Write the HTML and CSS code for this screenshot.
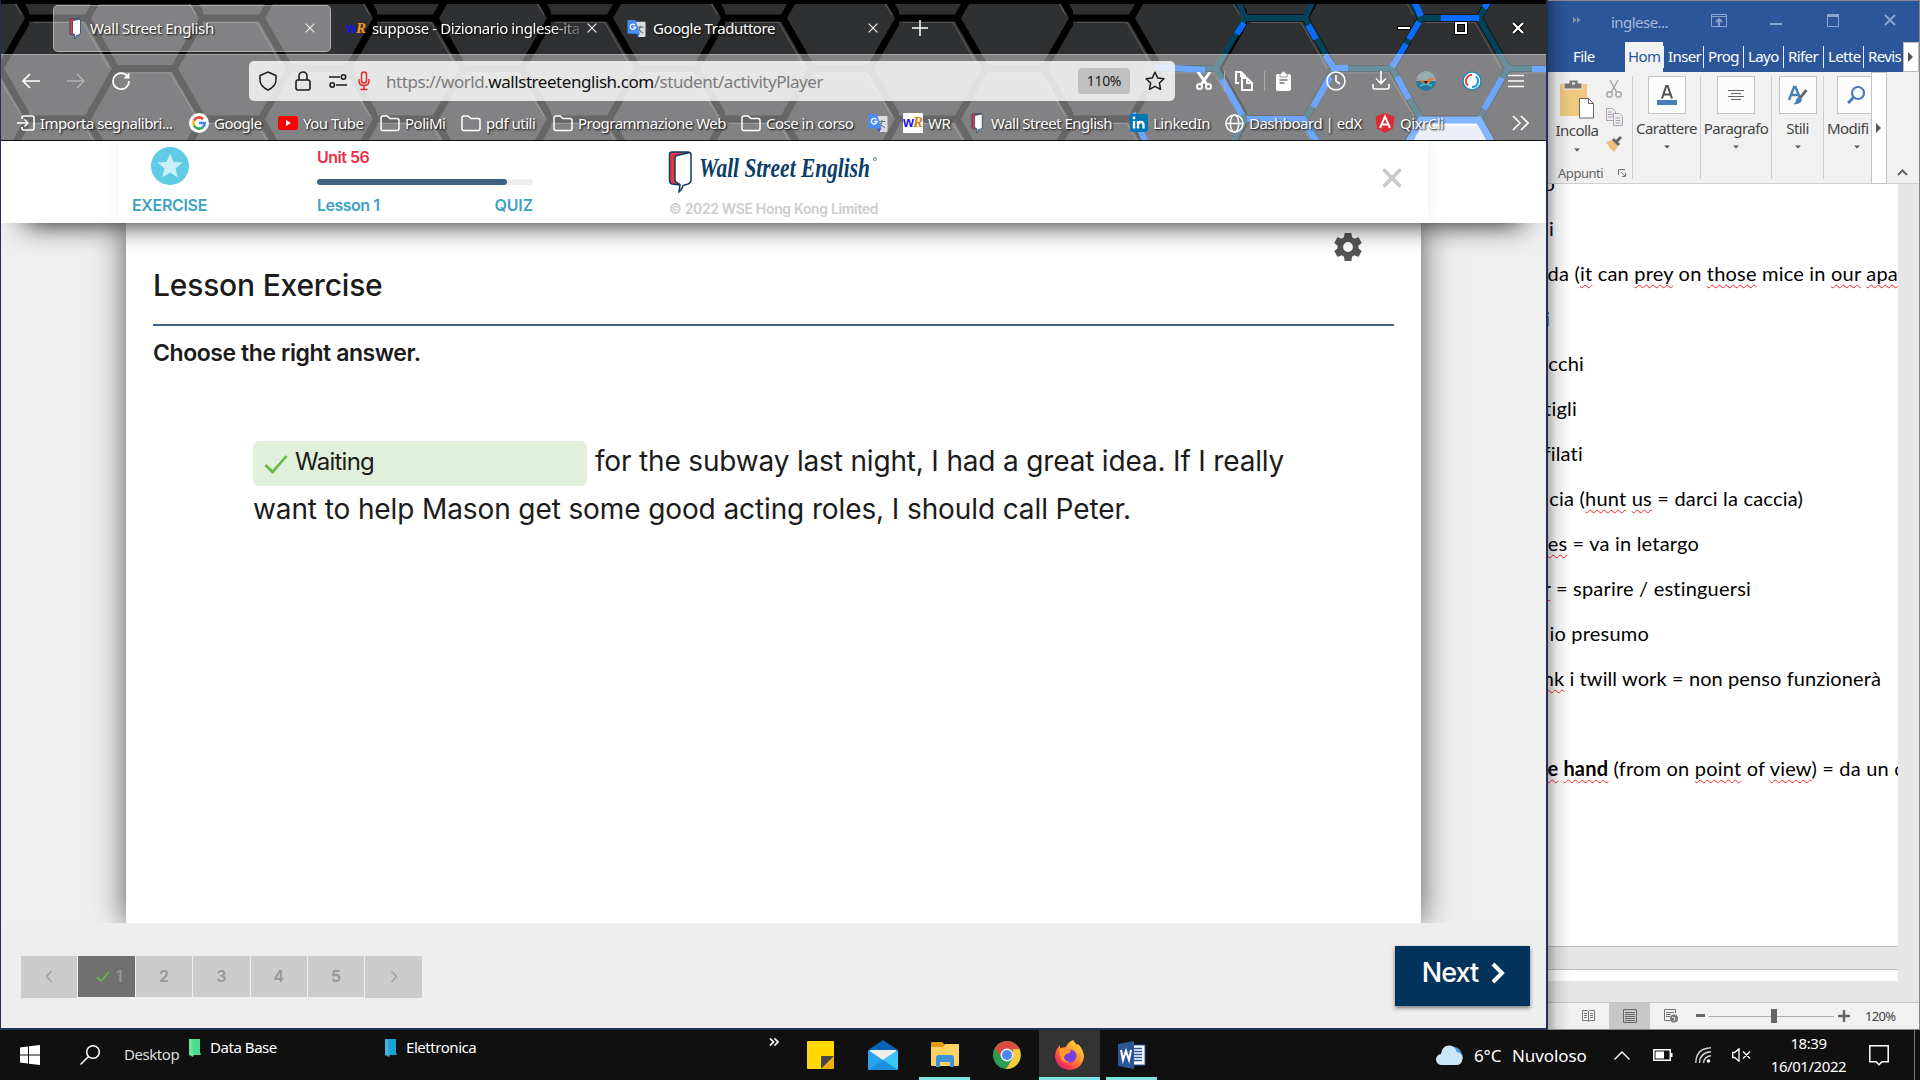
FILE: index.html
```html
<!DOCTYPE html>
<html lang="it">
<head>
<meta charset="utf-8">
<title>Wall Street English</title>
<link rel="stylesheet" href="styles.css">
</head>
<body>
<svg class="defs" width="0" height="0">
  <defs>
    <symbol id="wse" viewBox="0 0 24 42"><path d="M4 1.5h16q3 0 3 3v25q0 3-3 4l-5 1.500q-2 4-4.500 6.500l1-7-7.500-1Q1.500 33 1.500 30V4q0-2.500 2.500-2.500z" fill="#fff"/><path d="M3 1.500h18L9 5Q7 5.500 7 7.500v23l6 3.500-9-.5Q1.500 33 1.500 30V4q0-2.500 1.500-2.500z" fill="#e33b3b"/><path d="M4 1.500h16q3 0 3 3v25q0 3-3 4l-5 1.500q-1 4-4 6.500l1-7-8-1Q1.500 33 1.500 30V4q0-2.500 2.500-2.500zM22 2 9 5Q7 5.500 7 7.500v22q0 2 5 4.500" fill="none" stroke="#0b3d69" stroke-width="1.500"/></symbol>
    <symbol id="gtr" viewBox="0 0 20 20"><path d="M8 3h10.500q1 0 1 1v14q0 1-1 1H12z" fill="#dedede"/><path d="M10.500 8.500h7M14 7v1.500q-1 4-3 6M12 10q2 3.500 5 5" fill="none" stroke="#607988" stroke-width="1.200"/><path d="M1.500 1H9l4.500 14.500H1.500q-1 0-1-1V2q0-1 1-1z" fill="#4a8af4"/><path d="M9 15.500h4.500L11 19z" fill="#2255c4"/><path d="M8.300 6.300A2.800 2.800 0 1 0 9 8.500H6.300" fill="none" stroke="#fff" stroke-width="1.300"/></symbol>
    <symbol id="folder" viewBox="0 0 20 17"><path d="M1 13.500V3q0-2 2-2h4l3 2.500h7q2 0 2 2v8q0 2-2 2H3q-2 0-2-2z" fill="none" stroke="#fff" stroke-width="1.500"/></symbol>
    <symbol id="x" viewBox="0 0 10 10"><path d="M.7.700l8.600 8.600M9.300.7.700 9.300" fill="none" stroke="currentColor" stroke-width="1.200"/></symbol>
    <symbol id="down" viewBox="0 0 6 4"><path d="M0 .5h6l-3 3z" fill="#555"/></symbol>
    <symbol id="leaf" viewBox="0 0 12 18"><path d="M0 0h11v13l1 3H5l-1 2-4-2z" fill="currentColor"/><path d="M0 0h3l1 16-4 0z" fill="#fff" opacity=".18"/></symbol>
    <pattern id="hex" width="174" height="101" patternUnits="userSpaceOnUse" patternTransform="translate(725 18)">
      <rect width="174" height="101" fill="#2f3032"/>
      <path d="M4 4.500H54L80 50M4 4.500M170 4.500 144 50M91 55H141L167 98M84 55 60 98" fill="none" stroke="#57575a" stroke-width="1.200"/>
      <path d="M0 0H58M0 101H58M58 0 87 50.500 58 101M87 50.500H145M145 50.500 174 0M145 50.500 174 101" fill="none" stroke="#000" stroke-width="7"/>
    </pattern>
  </defs>
</svg>

<div class="desktop">
  <div class="windows">
    <section class="browser">
      <div class="chrome">
        <svg class="theme" width="1545" height="140" viewBox="1 0 1545 140">
          <rect x="0" width="1547" height="140" fill="url(#hex)"/>
          <g fill="none" stroke-width="6">
            <path d="M1237-2l8 20h60l9-20M1245 18l-29 50.500M1305 18l29 50.500h58l29-50.500h58l29 50.500h40M1421 18l-12-20M1479 18l12-20M1216 68.500l29 50.500h60l29-50.500M1160 68.500h56M1392 68.500l29 50.500M1508 68.500l-29 50.500M1245 119l-12 24M1305 119l14 24" stroke="#06435a"/>
            <path d="M1244 23l-7 11M1308 25l8 14M1325 55l9 13 14 0M1419 22l-10 17M1406 44l-14 23M1441 18h38M1484 8l7-10M1413-2l8 18M1222 79l20 36M1313 107l17-30M1247 119h56l14 24M1133 113l12 28M1397 77l12 22M1502 78l-18 31M1155 67l50 3M1532 69h16" stroke="#0a6cff"/>
            <path d="M1421 120h58l18 32h-94z" fill="#dfe3f2" stroke="#2f86ff" stroke-width="7"/>
            <path d="M1424 125h52" stroke="#fff" stroke-width="2"/>
          </g>
          <rect width="1547" height="4"/>
        </svg>
        <div class="tabs">
          <div class="tab active"><svg class="i-wse" width="12" height="21"><use href="#wse"/></svg><span>Wall Street English</span><svg class="tx" width="10" height="10"><use href="#x"/></svg></div>
          <div class="tab t2"><b class="wr"><i>w</i>R</b><span>suppose - Dizionario inglese-ita</span><svg class="tx" width="10" height="10"><use href="#x"/></svg></div>
          <div class="tab t3"><svg width="19" height="19"><use href="#gtr"/></svg><span>Google Traduttore</span><svg class="tx" width="10" height="10"><use href="#x"/></svg></div>
          <svg class="plus" width="16" height="16" viewBox="0 0 16 16"><path d="M8 0v16M0 8h16" stroke="#fff" stroke-width="1.500"/></svg>
          <div class="controls">
            <svg width="14" height="14" viewBox="0 0 14 14"><path d="M0 7h14" stroke="#000" stroke-width="4"/><path d="M1 7h12" stroke="#fff" stroke-width="2"/></svg>
            <svg width="14" height="14" viewBox="0 0 14 14"><path d="M2 2h10v10H2z" fill="none" stroke="#000" stroke-width="4"/><path d="M2 2h10v10H2z" fill="none" stroke="#fff" stroke-width="2"/></svg>
            <svg width="14" height="14" viewBox="0 0 14 14"><path d="M2 2l10 10M12 2 2 12" stroke="#000" stroke-width="4"/><path d="M2 2l10 10M12 2 2 12" stroke="#fff" stroke-width="2.300"/></svg>
          </div>
        </div>
        <div class="toolbar">
          <div class="nav">
            <svg width="18" height="16" viewBox="0 0 18 16" fill="none" stroke="#fff" stroke-width="1.600"><path d="M18 8H1M8 1 1 8l7 7"/></svg>
            <svg width="18" height="16" viewBox="0 0 18 16" fill="none" stroke="#b4b4b5" stroke-width="1.400"><path d="M0 8h17M10 1l7 7-7 7"/></svg>
            <svg width="18" height="18" viewBox="0 0 18 18" fill="none" stroke="#fff" stroke-width="1.700"><path d="M15.500 4.500A8 8 0 1 0 17 9"/><path d="M17.500.5v6h-6z" fill="#fff" stroke="none"/></svg>
          </div>
          <div class="url">
            <svg width="18" height="20" viewBox="0 0 18 20" fill="none" stroke="#1d1d1f" stroke-width="1.500"><path d="M9 1l8 3.500V9q0 6-8 10.200Q1 15 1 9V4.500z"/></svg>
            <svg width="16" height="20" viewBox="0 0 16 20" fill="none" stroke="#1d1d1f" stroke-width="1.600"><rect x="1" y="9" width="14" height="10" rx="2"/><path d="M4 9V5a4 4 0 0 1 8 0v4"/></svg>
            <svg width="18" height="14" viewBox="0 0 18 14" fill="none" stroke="#1d1d1f" stroke-width="1.600"><path d="M0 3h11M7 11h11"/><circle cx="14.500" cy="3" r="2.200"/><circle cx="3.200" cy="11" r="2.200"/></svg>
            <svg width="12" height="20" viewBox="0 0 12 20" fill="none" stroke="#e22b24" stroke-width="1.500"><rect x="3.500" y="1" width="5" height="11" rx="2.500"/><path d="M1 8v2q0 4.500 5 4.500T11 10V8M6 14.500v4M2.500 18.500h7"/></svg>
            <span class="addr">https://world.<b>wallstreetenglish.com</b>/student/activityPlayer</span>
            <span class="zoom">110%</span>
            <svg width="20" height="20" viewBox="0 0 20 20" fill="none" stroke="#1d1d1f" stroke-width="1.500" stroke-linejoin="round"><path d="M10 1.200l2.700 5.700 6.200.8-4.500 4.300 1.100 6.300L10 15.300l-5.500 3 1.100-6.300L1.100 7.700l6.200-.8z"/></svg>
          </div>
          <div class="tools">
            <svg width="16" height="18" viewBox="0 0 16 18" fill="none" stroke="#fff" stroke-width="2"><path d="M2 0l8.500 12M14 0 5.500 12" stroke-width="3"/><circle cx="3.500" cy="14.500" r="2.500"/><circle cx="12.500" cy="14.500" r="2.500"/></svg>
            <i class="sep"></i>
            <svg width="18" height="20" viewBox="0 0 18 20" fill="none" stroke="#fff" stroke-width="2"><path d="M4 12H1V1h5l4 4v2M6 1v4h4"/><path d="M7 7h5l5 5v7H7zM12 7v5h5" fill="#808182"/></svg>
            <i class="sep"></i>
            <svg width="15" height="20" viewBox="0 0 15 20"><rect y="3" width="15" height="17" rx="2" fill="#fff"/><path d="M4 6V3l3.500-3L11 3v3z" fill="#fff" stroke="#777" stroke-width=".7"/><path d="M3.500 9h8M3.500 12h5" stroke="#777" stroke-width="1.400"/></svg>
            <svg width="20" height="20" viewBox="0 0 20 20" fill="none" stroke="#fff" stroke-width="1.600"><circle cx="10" cy="10" r="9"/><path d="M10 4v6l4 3"/></svg>
            <svg width="18" height="19" viewBox="0 0 18 19" fill="none" stroke="#fff" stroke-width="1.600"><path d="M9 0v12M4 7.500l5 5 5-5M1 13v3q0 2 2 2h12q2 0 2-2v-3"/></svg>
            <svg width="20" height="20" viewBox="0 0 20 20"><circle cx="10" cy="10" r="10" fill="#27799a"/><path d="M0 10a10 10 0 0 1 20 0z" fill="#96aeb2"/><path d="M4 15q6-4 12 0" stroke="#49b3cf" stroke-width="2" fill="none"/><path d="M0 8l9 2 5-3 6 0-5 3-3 3-5-1z" fill="#d9803d"/><path d="M7 10l5 0-2 3z" fill="#222"/></svg>
            <svg width="20" height="20" viewBox="0 0 20 20"><circle cx="10" cy="10" r="9" fill="#fff" stroke="#1d8cb8" stroke-width="1.500"/><path d="M10 4a6 6 0 0 0-4 10.500" fill="none" stroke="#e04848" stroke-width="2"/><path d="M10 16A6 6 0 0 0 14 5.500" fill="none" stroke="#1d9bc8" stroke-width="2"/></svg>
            <svg width="16" height="14" viewBox="0 0 16 14"><path d="M0 1.500h16M0 7h16M0 12.500h16" stroke="#fff" stroke-width="1.500"/></svg>
          </div>
        </div>
        <div class="bookmarks">
          <a><svg width="18" height="16" viewBox="0 0 18 16" fill="none" stroke="#fff" stroke-width="1.600"><path d="M5 4V3q0-2 2-2h8q2 0 2 2v10q0 2-2 2H7q-2 0-2-2v-1M0 8h11M7.500 4.500 11 8l-3.500 3.500"/></svg>Importa segnalibri...</a>
          <a><svg width="20" height="20" viewBox="0 0 20 20" fill="none" stroke-width="2.600"><circle cx="10" cy="10" r="10" fill="#fff"/><path d="M14 6A5.700 5.700 0 0 0 5 7.500" stroke="#ea4335"/><path d="M5 7.500a5.700 5.700 0 0 0 0 5" stroke="#fbbc05"/><path d="M5 12.500a5.700 5.700 0 0 0 8.500 2" stroke="#34a853"/><path d="M13.500 14.500A5.700 5.700 0 0 0 15.700 10H10" stroke="#4285f4"/></svg>Google</a>
          <a><svg width="20" height="14" viewBox="0 0 20 14"><rect width="20" height="14" rx="2.500" fill="#f00"/><path d="M8 4l5 3-5 3z" fill="#fff"/></svg>You Tube</a>
          <a><svg width="20" height="17"><use href="#folder"/></svg>PoliMi</a>
          <a><svg width="20" height="17"><use href="#folder"/></svg>pdf utili</a>
          <a><svg width="20" height="17"><use href="#folder"/></svg>Programmazione Web</a>
          <a><svg width="20" height="17"><use href="#folder"/></svg>Cose in corso</a>
          <a><svg width="20" height="20"><use href="#gtr"/></svg></a>
          <a><b class="wr box"><i>w</i>R</b>WR</a>
          <a><svg class="m8" width="12" height="20"><use href="#wse"/></svg>Wall Street English</a>
          <a><svg width="18" height="18" viewBox="0 0 18 18"><rect width="18" height="18" rx="2" fill="#0077b5"/><path d="M4 7v7.500M8 7v7.500M8 11q0-3 2.800-3T13.500 11v3.500" fill="none" stroke="#fff" stroke-width="2.300"/><circle cx="4" cy="4" r="1.400" fill="#fff"/></svg>LinkedIn</a>
          <a><svg width="19" height="19" viewBox="0 0 19 19" fill="none" stroke="#fff" stroke-width="1.500"><circle cx="9.500" cy="9.500" r="8.500"/><ellipse cx="9.500" cy="9.500" rx="4.200" ry="8.500"/><path d="M1 9.500h17"/></svg>Dashboard | edX</a>
          <a><svg width="20" height="20" viewBox="0 0 20 20"><path d="M10 0l9.500 3.400L18 15.500 10 20l-8-4.500L.5 3.400z" fill="#dd2a33"/><path d="M5 15 10 3.500 15 15M7 11.500h6" fill="none" stroke="#fff" stroke-width="1.900"/></svg>QixrCli</a>
          <a><svg width="17" height="16" viewBox="0 0 17 16" fill="none" stroke="#fff" stroke-width="1.600"><path d="M1 1l7 7-7 7M9 1l7 7-7 7"/></svg></a>
        </div>
      </div>

      <div class="page">
        <header class="head">
          <div class="headin">
            <div class="kind"><svg width="38" height="38" viewBox="0 0 38 38"><circle cx="19" cy="19" r="19" fill="#5fcbe5"/><path d="M19 6.500l3.500 8.500 9 .6-7 5.800 2.300 9L19 25.500l-7.800 4.900 2.300-9-7-5.800 9-.6z" fill="#cbeff8"/></svg><span>EXERCISE</span></div>
            <div class="prog"><span class="unit">Unit 56</span><div class="bar"><div class="fill"></div></div><div class="ends"><span>Lesson 1</span><span class="quiz">QUIZ</span></div></div>
            <div class="brand"><svg width="210" height="44" viewBox="0 0 210 44"><use href="#wse" width="24" height="43"/><text class="script" x="31" y="27" textLength="171" lengthAdjust="spacingAndGlyphs">Wall Street English</text><circle cx="207" cy="9" r="1.500" fill="none" stroke="#0b3d69" stroke-width=".6"/></svg><span>© 2022 WSE Hong Kong Limited</span></div>
            <svg class="close" width="20" height="20" viewBox="0 0 20 20"><path d="M2.500 2.500l15 15M17.500 2.500l-15 15" stroke="#c8c8c8" stroke-width="3.600" stroke-linecap="round"/></svg>
          </div>
        </header>
        <main class="card">
          <svg class="gear" width="28" height="28" viewBox="2 2 20 20"><path fill="#555" d="M19.430 12.980c.04-.32.070-.64.070-.98s-.03-.66-.07-.98l2.110-1.650c.19-.15.240-.42.120-.64l-2-3.460c-.12-.22-.39-.3-.61-.22l-2.490 1c-.52-.4-1.080-.73-1.690-.98l-.38-2.650A.490.490 0 0 0 14 2h-4c-.25 0-.46.180-.49.420l-.38 2.650c-.61.250-1.170.59-1.690.98l-2.490-1c-.23-.09-.49 0-.61.220l-2 3.460c-.13.220-.07.490.120.640l2.110 1.650c-.04.320-.07.650-.07.980s.03.660.070.980l-2.110 1.650c-.19.150-.24.420-.12.640l2 3.460c.12.220.39.300.61.220l2.490-1c.52.400 1.080.73 1.690.98l.38 2.650c.03.240.240.420.490.420h4c.25 0 .46-.18.490-.42l.38-2.650c.61-.25 1.170-.59 1.690-.98l2.490 1c.23.090.49 0 .61-.22l2-3.460c.12-.22.070-.49-.12-.64zM12 15.500a3.500 3.500 0 1 1 0-7 3.500 3.500 0 0 1 0 7z"/></svg>
          <h1>Lesson Exercise</h1>
          <h2>Choose the right answer.</h2>
          <div class="question">
            <div class="line"><span class="answer"><svg width="24" height="20" viewBox="0 0 24 20"><path d="M1.500 11l7 7L22.500 2" fill="none" stroke="#62b944" stroke-width="2.600"/></svg>Waiting</span><span class="s1">for the subway last night, I had a great idea. If I really</span></div>
            <div class="line">want to help Mason get some good acting roles, I should call Peter.</div>
          </div>
        </main>
        <footer class="foot">
          <div class="pager">
            <span class="arr"><svg width="8" height="13" viewBox="0 0 8 13"><path d="M6.500 1 1.500 6.500l5 5.500" fill="none" stroke="#a2a2a2" stroke-width="1.700"/></svg></span>
            <span class="on"><svg width="14" height="11" viewBox="0 0 14 11"><path d="M1 6l4 4 8-9" fill="none" stroke="#5fb548" stroke-width="1.800"/></svg>1</span>
            <span>2</span><span>3</span><span>4</span><span>5</span>
            <span class="arr"><svg width="8" height="13" viewBox="0 0 8 13"><path d="M1.500 1l5 5.500-5 5.500" fill="none" stroke="#a2a2a2" stroke-width="1.700"/></svg></span>
          </div>
          <div class="next">Next<svg width="14" height="22" viewBox="0 0 14 22"><path d="M2 2l9 9-9 9" fill="none" stroke="#fff" stroke-width="4"/></svg></div>
        </footer>
      </div>
    </section>

    <section class="word">
      <div class="title">
        <svg width="8" height="6" viewBox="0 0 8 6"><path d="M0 0l3.500 3L0 6zM4 0l3.500 3L4 6z" fill="#8794ab"/></svg>
        <span>inglese...</span>
        <svg width="16" height="13" viewBox="0 0 16 13" fill="none" stroke="#8ea6cf"><path d="M.5.500h15v12H.5zM.5 2.500h15"/><path d="M8 12V5M5 8l3-3 3 3" stroke-width="1.800"/></svg>
        <svg width="12" height="13" viewBox="0 0 12 13"><path d="M0 10h12" stroke="#8ea6cf" stroke-width="2"/></svg>
        <svg width="12" height="13" viewBox="0 0 12 13" fill="none" stroke="#8ea6cf"><path d="M.5.500h11v12H.5z"/><path d="M0 1.500h12" stroke-width="3"/></svg>
        <svg width="12" height="12" viewBox="0 0 12 12"><path d="M1 1l10 10M11 1 1 11" stroke="#8ea6cf" stroke-width="1.800"/></svg>
      </div>
      <div class="wtabs"><span class="file">File</span><span class="home">Hom</span><span>Inser</span><span>Prog</span><span>Layo</span><span>Rifer</span><span>Lette</span><span>Revis</span><span class="more"><svg width="6" height="10" viewBox="0 0 6 10"><path d="M0 0l5 5-5 5z" fill="#555"/></svg></span></div>
      <div class="ribbon">
        <div class="grp clip">
          <div class="paste"><svg width="36" height="40" viewBox="0 0 36 40"><path d="M1 4h27v32H1z" fill="#edc87e"/><path d="M5 3h5V0h9v3h4v6H5z" fill="#777" stroke="#f1f1f1"/><rect x="13" y="2.500" width="3" height="2" fill="#f1f1f1"/><path d="M20.500 18.500h9l5 5V38h-14zM29.500 18.500v5h5" fill="#fff" stroke="#666"/></svg><span>Incolla</span><svg width="6" height="4"><use href="#down"/></svg></div>
          <div class="mini">
            <svg width="16" height="18" viewBox="0 0 16 18" fill="none" stroke="#a8a8a8" stroke-width="1.500"><path d="M4 0l6.500 12M12 0 5.500 12"/><circle cx="3.500" cy="14.500" r="2.700"/><circle cx="12.500" cy="14.500" r="2.700"/></svg>
            <svg width="17" height="18" viewBox="0 0 17 18" fill="#f1edf2" stroke="#aaa2ac"><path d="M.5.500h6l3 3v9h-9zM2 4h4M2 6.500h5M2 9h5"/><path d="M7.500 5.500h6l3 3v9h-9zM9.500 10h5M9.500 12.500h5M9.500 15h5"/></svg>
            <svg width="18" height="16" viewBox="0 0 18 16"><path d="M0 6l6-2 6 6-4 6q-5-4-8-10z" fill="#edc07c"/><path d="M7 3l6 6M10 6l5-5" stroke="#666" stroke-width="3"/></svg>
          </div>
          <div class="gname">Appunti<svg width="8" height="8" viewBox="0 0 8 8" fill="none" stroke="#777"><path d="M.5 6V.500H7M3 3l4 4M7.500 4v3.500H4"/></svg></div>
        </div>
        <div class="grp"><div class="big"><svg width="20" height="20" viewBox="0 0 20 20"><path d="M5 13.500 9.300 1h1.400L15 13.500M6.500 9.500h7" fill="none" stroke="#505050" stroke-width="2"/><path d="M0 15h20v5H0z" fill="#4a7ebb"/></svg></div>Carattere<svg width="6" height="4"><use href="#down"/></svg></div>
        <div class="grp"><div class="big"><svg width="16" height="11" viewBox="0 0 16 11"><path d="M0 .5h16M3 3.500h10M0 6.500h16M3 9.500h10" stroke="#666"/></svg></div>Paragrafo<svg width="6" height="4"><use href="#down"/></svg></div>
        <div class="grp"><div class="big"><svg width="20" height="20" viewBox="0 0 20 20"><path d="M1 15 6 2h1.500L12 13M3 10h7" fill="none" stroke="#4a7ebb" stroke-width="2.400"/><path d="M18.500 5 12 13" stroke="#666" stroke-width="2.800"/><path d="M12 12q3 1 1 5-3 3-8 2 3-1 3-4 1-3 4-3z" fill="#4a7ebb"/></svg></div>Stili<svg width="6" height="4"><use href="#down"/></svg></div>
        <div class="grp cut"><div class="big"><svg width="18" height="18" viewBox="0 0 18 18" fill="none" stroke="#4a7ebb" stroke-width="2.200"><circle cx="11" cy="7" r="6"/><path d="M6.500 11.500 1 17" stroke-width="3"/></svg></div>Modifi<svg width="6" height="4"><use href="#down"/></svg></div>
        <div class="rmore"><svg width="6" height="10" viewBox="0 0 6 10"><path d="M0 0l5 5-5 5z" fill="#555"/></svg></div>
        <div class="fold"><svg width="11" height="7" viewBox="0 0 11 7"><path d="M1 6l4.500-4.500L10 6" fill="none" stroke="#666" stroke-width="2"/></svg></div>
      </div>
      <div class="doc">
        <div class="sheet">
          <p class="w7"><span>o</span></p><p class="w6"><span>pi</span></p>
          <p class="w350"><span>da (<u>it</u> can <u>prey</u> on <u>those</u> mice in <u>our</u> <u>apa</u></span></p>
          <p class="w2"><span>i</span></p><p class="w36"><span>ecchi</span></p><p class="w29"><span>tigli</span></p><p class="w35"><span>filati</span></p>
          <p class="w255"><span>cia (<u>hunt</u> <u>us</u> = darci la caccia)</span></p>
          <p class="w151"><span><u>es</u> = va in letargo</span></p>
          <p class="w203"><span><u>r</u> = sparire / estinguersi</span></p>
          <p class="w101"><span>io presumo</span></p>
          <p class="w333"><span><u>nk</u> i twill work = non penso funzionerà</span></p>
          <p></p>
          <p class="w357"><span><b><u>e</u> <u>hand</u></b> (from on <u>point</u> of <u>view</u>) = da un c</span></p>
        </div>
        <div class="sheet second"></div>
      </div>
      <div class="status">
        <span><svg width="13" height="14" viewBox="0 0 13 14" fill="none" stroke="#777"><path d="M.5 1.500h5l1 1 1-1h5v10h-5l-1 1-1-1h-5zM6.500 2v11M2 4.500h3M2 6.500h3M2 8.500h3M8 4.500h3M8 6.500h3M8 8.500h3"/></svg></span>
        <span class="sel"><svg width="14" height="14" viewBox="0 0 14 14" fill="none" stroke="#666"><path d="M.5.500h13v13H.5zM2 3.500h10M2 5.500h10M2 7.500h10M2 9.500h10M2 11.500h10"/></svg></span>
        <span><svg width="14" height="14" viewBox="0 0 14 14" fill="none" stroke="#777"><path d="M11.500 4V.500H.5v11H6M2 3.500h8M2 5.500h5M2 7.500h4"/><circle cx="10" cy="9.500" r="4" fill="#777" stroke="none"/><path d="M8 8l3 1-1 3" stroke="#eee"/></svg></span>
        <svg width="9" height="3"><rect width="9" height="3" fill="#666"/></svg>
        <div class="slider"><i></i></div>
        <svg width="12" height="12" viewBox="0 0 12 12"><path d="M6 0v12M0 6h12" stroke="#666" stroke-width="2.500"/></svg>
        <em>120%</em>
      </div>
      <div class="wshade"></div>
    </section>
  </div>

  <footer class="taskbar">
    <svg width="20" height="20" viewBox="0 0 20 20" fill="#fff"><path d="M0 2.500 8 1.400V9.500H0zM9 1.200 20 0v9.500H9zM0 10.500h8v8L0 17.500zM9 10.500h11V20L9 18.700z"/></svg>
    <svg width="20" height="20" viewBox="0 0 20 20" fill="none" stroke="#fff" stroke-width="1.500"><circle cx="13" cy="7" r="6.300"/><path d="M8.500 11.500.5 19.500"/></svg>
    <span class="dsk">Desktop</span>
    <span class="link green"><svg width="12" height="18"><use href="#leaf"/></svg><b>Data Base</b></span>
    <span class="link blue"><svg width="12" height="18"><use href="#leaf"/></svg><b>Elettronica</b></span>
    <svg class="chev" width="10" height="8" viewBox="0 0 10 8" fill="none" stroke="#fff" stroke-width="1.700"><path d="M1 .5 4.500 4 1 7.500M5.500.5 9 4 5.500 7.500"/></svg>
    <div class="app"><svg width="27" height="28" viewBox="0 0 27 28"><path d="M0 1q0-1 1-1h25q1 0 1 1v14L14 28H1q-1 0-1-1z" fill="#ffd900"/><path d="M14 28V16q0-1 1-1h12z" fill="#454545"/><path d="M14 28 27 15v12q0 1-1 1z" fill="#eeb010"/></svg></div>
    <div class="app"><svg width="30" height="30" viewBox="0 0 30 30"><path d="M0 10 15 0l15 10v4H0z" fill="#0a62b5"/><path d="M2 10h26v8L15 24 2 18z" fill="#eee"/><path d="M0 10l15 10L30 10v20H0z" fill="#2aa3ea"/><path d="M30 10v20L15 20z" fill="#3ac6f4"/><path d="M0 30h30L15 20z" fill="#1c8fdf"/></svg></div>
    <div class="app run"><svg width="28" height="26" viewBox="0 0 28 26"><path d="M0 1q0-1 1-1h10l3 3-2 3H0z" fill="#e29a06"/><path d="M0 5h12l2-3h13q1 0 1 1v20q0 1-1 1H1q-1 0-1-1z" fill="#fdd264"/><path d="M5 25V16q0-3 3-3h12q3 0 3 3v9h-4v-5H9v5z" fill="#3c92da"/></svg></div>
    <div class="app"><svg width="28" height="28" viewBox="0 0 28 28"><circle cx="14" cy="14" r="14" fill="#2a9d55"/><path d="M1.900 7A14 14 0 0 1 26.100 7L27 9H14L8 16z" fill="#da4c40"/><path d="M26.300 8A14 14 0 0 1 13 28l7-11 0-9z" fill="#fdca3f"/><circle cx="14" cy="14" r="6.500" fill="#eee"/><circle cx="14" cy="14" r="5" fill="#4a87f2"/></svg></div>
    <div class="app run cur"><svg width="29" height="30" viewBox="0 0 29 30"><defs><linearGradient id="ff" x1="1" y1="0" x2=".2" y2="1"><stop offset="0" stop-color="#fff24a"/><stop offset=".45" stop-color="#ff9a2c"/><stop offset=".75" stop-color="#ff4a44"/><stop offset="1" stop-color="#e0157c"/></linearGradient></defs><path d="M18 0q3 4 4 5l1-1q6 6 6 13Q27 29 14.500 30 2 29 0 17 0 10 5 5l0 3 6-1q2-5 7-7z" fill="url(#ff)"/><circle cx="15" cy="16" r="6.500" fill="#7a3fe0"/><path d="M4 9q5-1 6 1l6 0q-1 4-5 4l-2 3q0 4 6 5-8 2-10-5z" fill="#ff9d25"/></svg></div>
    <div class="app run"><svg width="28" height="28" viewBox="0 0 28 28"><path d="M14 4h13v20H14z" fill="#fff" stroke="#2b5797"/><path d="M16 7.500h8M16 10.500h8M16 13.500h8M16 16.500h8M16 19.500h8" stroke="#2b5797" stroke-width="1.400"/><path d="M0 3 16 0v28L0 25z" fill="#2b5797"/><path d="M3 9l2 10 3-9 3 9 2-10" fill="none" stroke="#fff" stroke-width="2"/></svg></div>
    <svg class="cloud" width="27" height="20" viewBox="0 0 27 20"><path d="M14 3q6-3 10 2 3 5 3 9l-8-4z" fill="#4b9be0"/><path d="M6 20a5.500 5.500 0 0 1-1-11Q6 0 14 .500q6 1 6.500 6.500Q27 8 26.500 14q-1 6-6 6z" fill="#c9e6fb"/></svg>
    <span class="temp">6°C</span><span class="wx">Nuvoloso</span>
    <svg width="16" height="9" viewBox="0 0 16 9" fill="none" stroke="#fff" stroke-width="1.400"><path d="M.5 8.500 8 1l7.500 7.500"/></svg>
    <svg width="20" height="12" viewBox="0 0 20 12"><path d="M.8.800h16.500v10.400H.8z" fill="none" stroke="#fff" stroke-width="1.500"/><path d="M18 4h1.500v4H18zM2.500 2.500H11v7H2.500z" fill="#fff"/></svg>
    <svg width="16" height="16" viewBox="0 0 16 16" fill="none" stroke="#ccc" stroke-width="1.400"><path d="M.8 16Q1 1.500 16 .8M4.500 16Q5 5.500 16 4.800M8.500 16Q9 9.500 16 8.800"/><circle cx="13.500" cy="14" r="1.800" fill="#fff" stroke="none"/></svg>
    <svg width="19" height="14" viewBox="0 0 19 14" fill="none" stroke="#fff" stroke-width="1.300"><path d="M.7 4.500h2L7 .8v12.400L2.700 9.500h-2zM11 3.500l7 7M18 3.500l-7 7"/></svg>
    <div class="clock"><span>18:39</span><span>16/01/2022</span></div>
    <svg width="20" height="21" viewBox="0 0 20 21"><path d="M.8.800h18.400v16H13l-3 3-3-3H.8z" fill="none" stroke="#fff" stroke-width="1.500"/></svg>
    <i class="peek"></i>
  </footer>
</div>
</body>
</html>
```
FILE: styles.css
```css
* { box-sizing: border-box; }
body { margin: 0; width: 1920px; height: 1080px; overflow: hidden; background: #101010; font-family: "Noto Sans", "Open Sans", sans-serif; }
svg { display: block; flex: none; }
.defs { position: absolute; }
.desktop { display: flex; flex-direction: column; height: 1080px; }
.windows { display: grid; grid-template-columns: 1548px 372px; height: 1030px; }

/* browser */
.browser { display: flex; flex-direction: column; border: solid #223054; border-width: 0 2px 2px 1px; overflow: hidden; }
.chrome { position: relative; height: 141px; padding-top: 4px; border-bottom: 1px solid #111; color: #fff; font-size: 15px; letter-spacing: -.35px; text-shadow: 1px 1px 2px #000; }
.theme { position: absolute; left: 0; top: 0; }
.tabs, .toolbar, .bookmarks { position: relative; }
.tabs { display: flex; align-items: center; height: 50px; padding: 0 0 2px 52px; }
.tab { display: flex; align-items: center; height: 47px; white-space: nowrap; }
.tab .tx { margin-left: auto; color: #eee; }
.active { width: 278px; padding: 0 15px 0 15px; background: rgba(255,255,255,.4); border: 1px solid rgba(255,255,255,.35); border-radius: 5px; }
.i-wse { margin-right: 9px; }
.t2 { width: 281px; padding: 0 19px 0 15px; gap: 7px; letter-spacing: -.4px; }
.t2 span { -webkit-mask-image: linear-gradient(90deg, #000 88%, transparent); mask-image: linear-gradient(90deg, #000 86%, rgba(0,0,0,.2)); }
.t3 { width: 280px; padding: 0 14px 0 15px; gap: 7px; letter-spacing: -.42px; }
.wr { font: italic bold 15px "Liberation Serif", serif; color: #f49a1c; letter-spacing: -1px; text-shadow: none; width: 19px; }
.wr i { color: #1414e6; font: bold 14px "Liberation Sans", sans-serif; }
.wr.box { width: 20px; height: 20px; background: #fff; line-height: 19px; color: #d98116; }
.plus { margin-left: 20px; }
.controls { display: flex; gap: 43px; margin: 0 21px 0 auto; }
.toolbar { display: flex; align-items: center; height: 52px; background: rgba(255,255,255,.4); border-top: 1px solid rgba(255,255,255,.3); }
.nav { display: flex; gap: 27px; width: 248px; padding-left: 21px; align-items: center; }
.url { display: flex; align-items: center; width: 926px; height: 40px; padding: 0 10px; background: rgba(255,255,255,.8); border-radius: 5px; text-shadow: none; }
.url svg:nth-child(2) { margin-left: 18px; }
.url svg:nth-child(3) { margin-left: 18px; }
.url svg:nth-child(4) { margin-left: 11px; }
.addr { margin: 1px auto 0 16px; color: #7b7b7b; font-size: 17px; letter-spacing: -.45px; }
.addr b { font-weight: 400; color: #111; }
.zoom { width: 52px; height: 26px; margin-right: 15px; background: #c0c0c0; border-radius: 4px; color: #222; font-size: 14px; line-height: 26px; text-align: center; }
.tools { display: grid; grid-template-columns: 28px 11px 29px 12px 50px 46px 44px 46px 46px 16px; align-items: center; padding-left: 21px; }
.sep { width: 1px; height: 20px; background: #aaa; }
.bookmarks { display: grid; grid-template-columns: 172px 89px 102px 81px 92px 188px 127px 35px 68px 159px 95px 150px 137px auto; height: 34px; padding-left: 16px; background: rgba(255,255,255,.4); letter-spacing: -.5px; white-space: nowrap; }
.bookmarks a { display: flex; align-items: center; gap: 5px; height: 34px; }
.m8 { margin-right: 3px; }

.page { display: flex; flex-direction: column; flex: 1; background: #efefef; font-family: Inter, sans-serif; color: #1b1b1b; }
.head { position: relative; z-index: 1; height: 82px; background: #fff; box-shadow: 0 24px 28px -24px rgba(0,0,0,.95); }
.headin { display: flex; width: 1309px; height: 82px; margin-left: 118px; padding-left: 13px; box-shadow: 0 -4px 14px rgba(0,0,0,.07); clip-path: inset(0 -20px 0 -20px); font-weight: 600; font-size: 16px; color: #3fa2c1; line-height: 20px; }
.kind { display: flex; flex-direction: column; align-items: center; width: 75px; padding-top: 6px; gap: 10px; letter-spacing: -.33px; }
.prog { width: 216px; margin-left: 110px; padding-top: 6px; letter-spacing: -.5px; }
.unit { display: block; color: #ee2b45; }
.bar { height: 6px; margin-top: 12px; border-radius: 3px; background: #eee; }
.fill { width: 190px; height: 6px; border-radius: 3px; background: #3f6383; }
.ends { display: flex; justify-content: space-between; margin-top: 10px; }
.quiz { letter-spacing: -.1px; }
.brand { width: 210px; margin-left: 135px; padding-top: 9px; color: #ccc; font-size: 14px; letter-spacing: -.34px; white-space: nowrap; }
.brand span { display: block; margin: 5px 0 0 1px; }
.script { font: italic bold 27px "Liberation Serif", serif; fill: #0b3d69; letter-spacing: 0; }
.close { margin: 27px 0 0 504px; }
.card { position: relative; width: 1295px; height: 700px; margin-left: 125px; padding: 44px 27px 0; background: #fff; box-shadow: 0 0 30px rgba(0,0,0,.65); }
.gear { position: absolute; right: 59px; top: 10px; }
h1 { margin: 0; height: 59px; border-bottom: 2px solid #3f6383; font-size: 30px; font-weight: 500; line-height: 36px; letter-spacing: -.2px; }
h2 { margin: 11px 0 0; font-size: 23px; font-weight: 600; line-height: 32px; letter-spacing: -.43px; }
.question { margin: 70px 0 0 100px; font-size: 28px; letter-spacing: -.11px; white-space: nowrap; }
.line { display: flex; align-items: center; height: 49px; }
.line + .line { margin-top: -4px; }
.answer { display: flex; align-items: center; gap: 7px; width: 334px; height: 45px; padding: 0 0 4px 11px; border-radius: 6px; background: #e1f0da; font-size: 24px; letter-spacing: -.75px; }
.answer svg { margin-top: 4px; }
.s1 { margin: -6px 0 0 8px; letter-spacing: -.17px; }
.foot { position: relative; z-index: 1; display: flex; justify-content: space-between; height: 105px; padding: 23px 16px 0 20px; background: #eee; }
.pager { display: flex; gap: 1px; margin-top: 10px; }
.pager span { display: flex; align-items: center; justify-content: center; width: 56.400px; height: 41px; padding-bottom: 1px; background: #ccc; color: #979797; font-size: 16px; font-weight: 600; }
.pager .arr { height: 42px; }
.pager .on { gap: 6px; padding-left: 5px; background: #707070; }
.next { display: flex; align-items: center; justify-content: center; gap: 13px; width: 135px; height: 60px; padding: 0 0 7px 2px; background: #02335a; box-shadow: 0 2px 4px rgba(0,0,0,.5); color: #fff; font-size: 27px; font-weight: 500; letter-spacing: -1px; }

/* word processor */
.word { position: relative; display: flex; flex-direction: column; border: solid #868686; border-width: 1px 1px 1px 0; overflow: hidden; color: #444; font-size: 15px; background: #e6e6e6; }
.title { display: grid; grid-template-columns: 38px 100px 59px 57px 57px 12px; align-items: center; height: 41px; padding: 0 0 3px 25px; background: #2b579a; color: #a5b8d9; letter-spacing: -.54px; }
.title span { margin-top: 4px; }
.wtabs { display: flex; height: 30px; background: #2b579a; color: #fff; line-height: 28px; letter-spacing: -.6px; }
.wtabs span { width: 40px; padding-left: 5px; background: linear-gradient(#e8eef7,#e8eef7) no-repeat 0 4px / 1px 22px; overflow: hidden; }
.wtabs .file { width: 77px; padding-left: 25px; background: none; }
.wtabs .home { width: 38px; padding-left: 3px; background: #f1f1f1; color: #2b579a; }
.wtabs .more { display: flex; align-items: center; justify-content: center; width: 16px; padding: 0; background: #fff; border: 1px solid #bbb; }
.ribbon { display: grid; grid-template-columns: 85px 68px 71px 52px 47px 16px auto; height: 112px; background: #f1f1f1; border-bottom: 1px solid #cfcfcf; letter-spacing: -.55px; line-height: 20px; }
.grp { display: flex; flex-direction: column; align-items: center; height: 103px; margin-top: 4px; border-right: 1px solid #cfcfcf; white-space: nowrap; }
.grp > svg { margin-top: 7px; }
.big { display: grid; place-items: center; flex: none; width: 38px; height: 38px; margin-bottom: 4px; background: #fcfcfc; border: 1px solid #c4c4c4; }
.cut { align-items: flex-start; overflow: hidden; padding-left: 3px; border: 0; }
.cut .big { margin-left: 10px; }
.cut > svg { margin-left: 27px; }
.clip { display: grid; grid-template-columns: 58px 26px; grid-template-rows: 82px 20px; padding-top: 4px; align-items: start; }
.paste { display: flex; flex-direction: column; align-items: center; line-height: 21px; }
.paste span { margin: 0 0 7px; }
.mini { display: flex; flex-direction: column; gap: 10px; }
.gname { grid-column: 1 / 3; display: flex; align-items: center; gap: 15px; padding: 1px 0 0 10px; font-size: 13px; letter-spacing: -.45px; color: #666; }
.rmore { display: grid; place-items: center; height: 112px; background: #fff; border: 1px solid #c4c4c4; }
.fold { display: flex; align-items: flex-end; padding: 0 0 8px 10px; }
.doc { height: 818px; }
.sheet { width: 350px; height: 763px; background: #fff; border-bottom: 1px solid #bdbdbd; overflow: hidden; font: 20px/45px Lato, sans-serif; color: #000; letter-spacing: .2px; }
.sheet p { display: flex; justify-content: flex-end; height: 45px; margin: 0; white-space: pre; }
.sheet p:first-child { margin-top: -23px; }
.sheet u { text-decoration: underline wavy #f22 1px; text-underline-offset: 3px; text-decoration-skip-ink: none; }
.w2 { width: 2px; }
.w6 { width: 6px; }
.w7 { width: 7px; }
.w29 { width: 29px; }
.w35 { width: 35px; }
.w36 { width: 36px; }
.w101 { width: 101px; }
.w151 { width: 151px; }
.w203 { width: 203px; }
.w255 { width: 255px; }
.w333 { width: 333px; letter-spacing: .1px; }
.w350 { width: 350px; }
.w357 { width: 356px; }
.second { height: 12px; margin-top: 22px; border-top: 1px solid #bdbdbd; border-bottom: 0; }
.status { display: flex; align-items: center; height: 27px; padding: 0 0 1px 20px; background: #f1f1f1; border-top: 1px solid #c4c4c4; }
.status span { display: grid; place-items: center; width: 41px; height: 26px; }
.status .sel { background: #c8c8c8; }
.status > svg:nth-of-type(1) { margin-left: 5px; }
.slider { display: flex; align-items: center; width: 125px; height: 14px; margin: 0 4px; padding-left: 62px; background: linear-gradient(#aaa,#aaa) no-repeat 0 7px / 125px 1px; }
.slider i { width: 6px; height: 14px; background: #666; }
.status em { margin-left: 15px; font: 13px "Noto Sans", sans-serif; letter-spacing: -.7px; }
.wshade { position: absolute; left: 0; top: 0; width: 22px; height: 1030px; background: linear-gradient(90deg, rgba(0,0,0,.3), rgba(0,0,0,.1) 40%, transparent); }

/* taskbar */
.taskbar { display: grid; grid-template-columns: 60px 44px 65px 196px 384px 26px 62px 62px 62px 58px 67px 330px 38px 38px 102px 39px 42px 37px 39px 98px 45px auto; align-items: center; height: 50px; padding-left: 20px; background: #101010; color: #fff; font-size: 15px; white-space: nowrap; letter-spacing: -.45px; }
.dsk { color: #ddd; margin-top: -2px; }
.link { display: flex; gap: 9px; height: 50px; padding-top: 9px; line-height: 17px; }
.link b { font-weight: 400; color: #fff; }
.green { color: #4ade8c; }
.blue { color: #1ba1d8; }
.chev { margin-top: -26px; }
.app { display: grid; place-items: center; width: 51px; height: 50px; }
.run { border-bottom: 3px solid #7fe3e3; padding-top: 3px; }
.cur { width: 61px; background: #333; }
.temp, .wx { font-size: 17px; letter-spacing: -.1px; }
.clock { display: flex; flex-direction: column; align-items: center; width: 75px; line-height: 23px; margin-top: -1px; }
.peek { width: 1px; height: 50px; background: #777; }
```
